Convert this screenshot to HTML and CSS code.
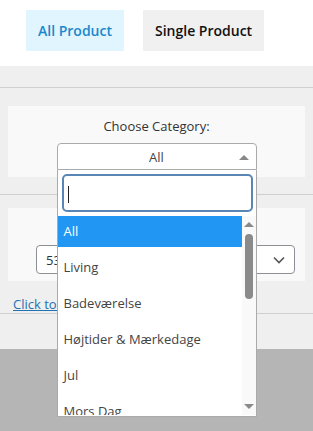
FILE: index.html
```html
<html>
    <head>
        <title>Product feed</title>
        <link rel="stylesheet" href="styles.css">
    </head>
    <body>
        <div class="tabs">
            <button class="tab active">All Product</button>
            <button class="tab">Single Product</button>
        </div>
        <div class="band"></div>
        <div class="section first">
            <div class="card">
                <div class="label">Choose Category:</div>
                <div class="choose">
                    <div class="chosen">All<span class="up"></span></div>
                    <div class="drop">
                        <div class="search"><span class="caret"></span></div>
                        <div class="results">
                            <ul class="list">
                                <li class="hl">All</li>
                                <li>Living</li>
                                <li>Badeværelse</li>
                                <li>Højtider &amp; Mærkedage</li>
                                <li>Jul</li>
                                <li>Mors Dag</li>
                                <li>Fars Dag</li>
                            </ul>
                            <div class="bar">
                                <span class="arr-up"></span>
                                <span class="thumb"></span>
                                <span class="arr-down"></span>
                            </div>
                        </div>
                    </div>
                </div>
            </div>
        </div>
        <div class="section second">
            <div class="card">
                <div class="label">Bestsellers to show in a column</div>
                <div class="pick">
                    <span>53 products in one column</span>
                    <svg width="12" height="8" viewBox="0 0 12 8"><path d="M1 1.5 L6 6.5 L11 1.5" fill="none" stroke="#555" stroke-width="1.6"/></svg>
                </div>
            </div>
            <a class="more" href="#">Click to generate the product feed</a>
        </div>
        <div class="section third"></div>
        <div class="shade"></div>
    </body>
</html>
```
FILE: styles.css
```css
body{
    margin: 0;
    font-family: 'Open Sans', 'Noto Sans', sans-serif;
    background: #b5b5b5;
    overflow: hidden;
}
.tabs{
    display: flex;
    gap: 19px;
    padding: 10px 0 15px 26px;
    background: #fff;
}
.tab{
    height: 41px;
    padding: 0 12px;
    border: none;
    background: #f0f0f0;
    color: #111;
    font-family: 'Open Sans', sans-serif;
    font-size: 14px;
    font-weight: 600;
}
.tab.active{
    background: #e0f5fe;
    color: #1a88cc;
}
.band{
    height: 21px;
    background: #efefef;
}
.section{
    background: #efefef;
    border-top: 1px solid #cfcfcf;
}
.section.first{
    padding: 18px 8px 17px 8px;
}
.section.second{
    padding: 13px 8px 0 8px;
    height: 119px;
    box-sizing: border-box;
}
.section.third{
    height: 35px;
}
.card{
    background: #f9f9f9;
    text-align: center;
    padding: 10px 0 7px 0;
}
.label{
    font-size: 13px;
    color: #333;
    line-height: 20px;
    margin-bottom: 7px;
}
.choose{
    position: relative;
    width: 200px;
    margin: 0 auto;
    text-align: center;
}
.chosen{
    position: relative;
    height: 27px;
    line-height: 27px;
    box-sizing: border-box;
    border: 1px solid #aaa;
    border-radius: 4px 4px 0 0;
    background: #fff;
    font-size: 13px;
    color: #444;
}
.up{
    position: absolute;
    right: 7px;
    top: 11px;
    border-left: 5px solid transparent;
    border-right: 5px solid transparent;
    border-bottom: 5px solid #888;
}
.drop{
    position: absolute;
    left: 0;
    top: 27px;
    width: 200px;
    height: 247px;
    box-sizing: border-box;
    border: 1px solid #aaa;
    border-top: none;
    background: #fff;
    text-align: left;
    z-index: 5;
}
.search{
    margin: 4px 3px 0 4px;
    height: 38px;
    box-sizing: border-box;
    border: 2px solid #5a86b6;
    border-radius: 5px;
    padding: 10px 0 0 4px;
}
.caret{
    display: block;
    width: 1px;
    height: 17px;
    background: #222;
}
.results{
    display: flex;
    margin-top: 4px;
    height: 199px;
    overflow: hidden;
}
.list{
    list-style: none;
    margin: 0;
    padding: 0;
    width: 184px;
}
.list li{
    height: 31px;
    line-height: 31px;
    padding-left: 6px;
    margin-bottom: 5px;
    font-size: 13px;
    color: #444;
}
.list li.hl{
    background: #2196f3;
    color: #fff;
}
.bar{
    width: 14px;
    background: #f9f9f9;
    display: flex;
    flex-direction: column;
    align-items: center;
}
.arr-up{
    margin-top: 6px;
    border-left: 5px solid transparent;
    border-right: 5px solid transparent;
    border-bottom: 5px solid #8a8a8a;
}
.thumb{
    width: 8px;
    height: 65px;
    margin-top: 7px;
    border-radius: 4px;
    background: #8a8a8a;
}
.arr-down{
    margin-top: auto;
    margin-bottom: 6px;
    border-left: 5px solid transparent;
    border-right: 5px solid transparent;
    border-top: 5px solid #8a8a8a;
}
.pick{
    display: flex;
    align-items: center;
    justify-content: space-between;
    width: 259px;
    height: 29px;
    box-sizing: border-box;
    margin-left: 28px;
    padding: 0 9px 0 9px;
    border: 1px solid #8c8f94;
    border-radius: 4px;
    background: #fff;
    font-size: 13px;
    color: #2c3338;
}
.more{
    display: block;
    margin: 14px 0 0 5px;
    font-size: 13px;
    color: #2271b1;
}
.shade{
    height: 100px;
}
```
